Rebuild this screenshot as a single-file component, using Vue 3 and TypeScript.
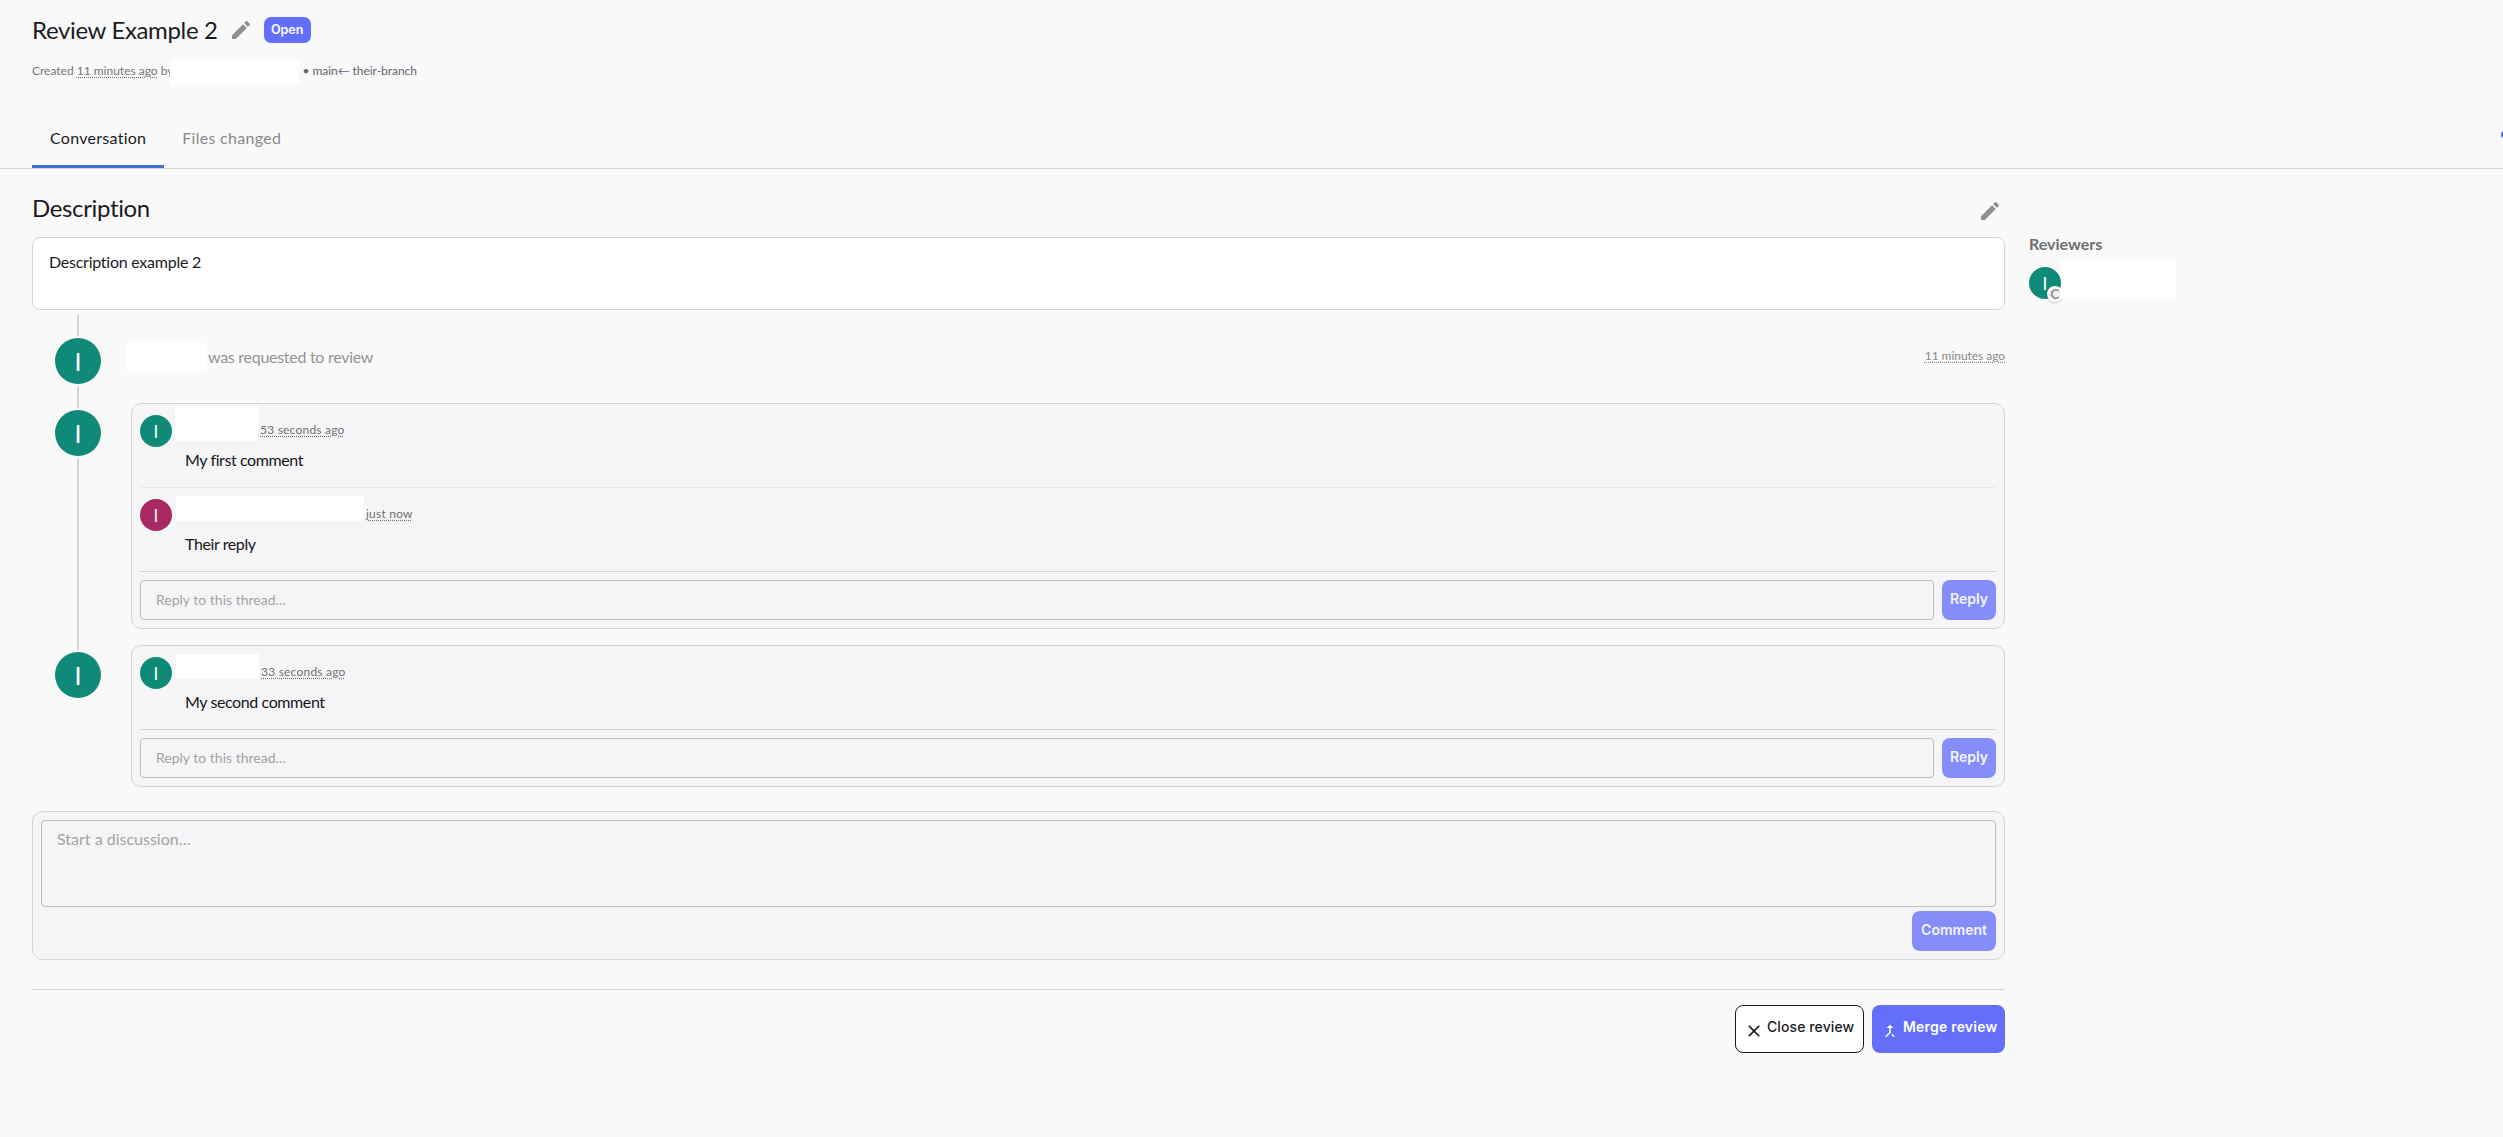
<script setup lang="ts">
interface ThreadComment {
  initialColor: string
  redactWidth: number
  tall: boolean
  time: string
  text: string
}
interface Thread {
  comments: ThreadComment[]
}

const teal = '#108a78'
const threads: Thread[] = [
  {
    comments: [
      { initialColor: teal, redactWidth: 83, tall: true, time: '53 seconds ago', text: 'My first comment' },
      { initialColor: '#a82862', redactWidth: 188, tall: false, time: 'just now', text: 'Their reply' }
    ]
  },
  {
    comments: [
      { initialColor: teal, redactWidth: 83, tall: false, time: '33 seconds ago', text: 'My second comment' }
    ]
  }
]
const pencil = 'M3 17.25V21h3.75L17.81 9.94l-3.75-3.75L3 17.25zM20.71 7.04c.39-.39.39-1.02 0-1.41l-2.34-2.34c-.39-.39-1.02-.39-1.41 0l-1.83 1.83 3.75 3.75 1.83-1.83z'
</script>

<template>
  <div class="page">
    <header class="head">
      <div class="title-row">
        <h1 class="title">Review Example 2</h1>
        <svg class="icon-edit" viewBox="0 0 24 24" width="24" height="24"><path :d="pencil" /></svg>
        <span class="badge">Open</span>
      </div>
      <div class="meta">
        <span>Created&nbsp;</span><span class="time-u">11 minutes ago</span><span>&nbsp;by</span>
        <span class="redact meta-redact"></span>
        <span class="meta-branch">• main← their-branch</span>
      </div>
    </header>

    <nav class="tabs">
      <a class="tab active">Conversation</a>
      <a class="tab">Files changed</a>
      <span class="dot"></span>
    </nav>

    <div class="columns">
      <main class="main">
        <div class="desc-head">
          <h2 class="title">Description</h2>
          <svg class="icon-edit" viewBox="0 0 24 24" width="24" height="24"><path :d="pencil" /></svg>
        </div>
        <div class="desc-box">Description example 2</div>

        <div class="timeline">
          <div class="item event">
            <div class="rail"><span class="avatar big" :style="{ background: teal }">I</span></div>
            <div class="event-body">
              <span class="redact event-redact"></span>
              <span class="event-text">was requested to review</span>
              <span class="time-u event-time">11 minutes ago</span>
            </div>
          </div>

          <div v-for="(thread, t) in threads" :key="t" class="item">
            <div class="rail"><span class="avatar big" :style="{ background: teal }">I</span></div>
            <div class="thread">
              <div v-for="(c, i) in thread.comments" :key="i" class="comment" :class="{ last: i === thread.comments.length - 1 }">
                <div class="comment-head">
                  <span class="avatar small" :style="{ background: c.initialColor }">I</span>
                  <span class="redact" :class="c.tall ? 'redact-tall' : 'redact-short'" :style="{ width: c.redactWidth + 'px' }"></span>
                  <span class="time-u comment-time">{{ c.time }}</span>
                </div>
                <p class="comment-text">{{ c.text }}</p>
              </div>
              <div class="reply-row">
                <input class="field" placeholder="Reply to this thread…" />
                <button class="btn primary-soft reply">Reply</button>
              </div>
            </div>
          </div>
        </div>

        <div class="composer">
          <textarea class="area" placeholder="Start a discussion…"></textarea>
          <div class="composer-actions">
            <button class="btn primary-soft comment-btn">Comment</button>
          </div>
        </div>

        <div class="footer">
          <button class="btn close">
            <svg viewBox="0 0 24 24" width="20" height="20"><path d="M19 6.41 17.59 5 12 10.59 6.41 5 5 6.41 10.59 12 5 17.59 6.41 19 12 13.41 17.59 19 19 17.59 13.41 12z" /></svg>
            <span>Close review</span>
          </button>
          <button class="btn merge">
            <svg viewBox="0 0 24 24" width="18" height="18"><path d="M17 20.41 18.41 19 15 15.59 13.59 17 17 20.41zM7.5 8H11v5.59L5.59 19 7 20.41l6-6V8h3.5L12 3.5 7.5 8z" /></svg>
            <span>Merge review</span>
          </button>
        </div>
      </main>

      <aside class="side">
        <h3 class="side-title">Reviewers</h3>
        <div class="reviewer">
          <span class="avatar small reviewer-avatar" :style="{ background: teal }">I<span class="mini">C</span></span>
          <span class="redact reviewer-redact"></span>
        </div>
      </aside>
    </div>
  </div>
</template>

<style scoped>
.page {
  font-family: Lato, "Liberation Sans", sans-serif;
  color: #1b1b1f;
  font-size: 16px;
}
.head {
  padding: 17px 32px 0;
  height: 108px;
  box-sizing: border-box;
}
.title-row {
  display: flex;
  align-items: center;
  height: 26px;
}
.title {
  margin: 0;
  font-size: 24px;
  font-weight: 400;
  line-height: 26px;
  letter-spacing: -0.35px;
}
.icon-edit {
  fill: #8f8f8f;
  display: block;
}
.title-row .icon-edit {
  margin-left: 11px;
}
.badge {
  margin-left: 11px;
  width: 47px;
  height: 26px;
  border-radius: 7px;
  background: #636ffb;
  color: #fff;
  font: 600 12.5px/26px Inter, sans-serif;
  text-align: center;
}
.meta {
  display: flex;
  align-items: flex-start;
  margin-top: 17px;
  font-size: 12px;
  line-height: 22px;
  color: #757575;
}
.time-u {
  text-decoration: underline dotted;
  text-underline-offset: 2px;
}
.redact {
  display: block;
  background: #fff;
  flex: none;
}
.meta-redact {
  width: 129px;
  height: 25px;
  margin-left: -3px;
}
.meta-branch {
  margin-left: 3px;
  letter-spacing: -0.05px;
  color: #5f6672;
}
.tabs {
  position: relative;
  display: flex;
  height: 60px;
  border-bottom: 1px solid #d4d4d4;
  overflow: hidden;
}
.tabs .tab:first-child {
  margin-left: 32px;
}
.tab {
  padding: 0 18px;
  height: 60px;
  box-sizing: border-box;
  line-height: 59px;
  font-size: 16px;
  letter-spacing: 0.28px;
  color: #8a8a8a;
  font-weight: 400;
}
.tab.active {
  color: #1b1b1f;
  border-bottom: 3px solid #3f6fd1;
}
.dot {
  position: absolute;
  right: -5px;
  top: 23px;
  width: 7px;
  height: 7px;
  border-radius: 50%;
  background: #3f6fd1;
}
.columns {
  display: flex;
  gap: 24px;
  padding-left: 32px;
}
.main {
  width: 1973px;
  flex: none;
  padding-top: 21px;
}
.desc-head {
  display: flex;
  align-items: center;
  justify-content: space-between;
  height: 36px;
  margin-bottom: 11px;
  padding-right: 3px;
}
.desc-head .icon-edit {
  margin-top: 5px;
}
.desc-box {
  height: 73px;
  box-sizing: border-box;
  padding: 12px 16px;
  line-height: 24px;
  letter-spacing: -0.25px;
  background: #fff;
  border: 1px solid #d4d4d4;
  border-radius: 8px;
}
.timeline {
  position: relative;
  padding-top: 21px;
  margin-bottom: 24px;
}
.timeline::before {
  content: "";
  position: absolute;
  left: 45px;
  top: 5px;
  width: 2px;
  height: 335px;
  background: #d4d4d4;
}
.item {
  position: relative;
  display: flex;
  margin-bottom: 16px;
}
.item:last-child {
  margin-bottom: 0;
}
.item.event {
  min-height: 56px;
}
.rail {
  width: 95px;
  flex: none;
  padding: 7px 0 0 23px;
  box-sizing: border-box;
}
.avatar {
  display: flex;
  align-items: center;
  justify-content: center;
  border-radius: 50%;
  color: #fff;
  flex: none;
}
.avatar.big {
  width: 46px;
  height: 46px;
  font-size: 25px;
  box-shadow: 0 0 0 2.5px #f9f9f9;
}
.avatar.small {
  width: 32px;
  height: 32px;
  font-size: 17px;
}
.event-body {
  flex: 1;
  display: flex;
  align-items: center;
  height: 29px;
  margin-top: 12px;
}
.event-redact {
  width: 80px;
  height: 29px;
}
.event-text {
  margin: -2px 0 0 1px;
  color: #939393;
  letter-spacing: -0.28px;
}
.event-time {
  margin: -4px 0 0 auto;
  font-size: 12px;
  letter-spacing: -0.05px;
  color: #8a8a8a;
}
.thread {
  flex: 1;
  margin-left: 4px;
  background: #f5f5f7;
  border: 1px solid #d4d4d4;
  border-radius: 10px;
  padding: 0 8px 8px;
}
.comment {
  padding: 2px 0 14px;
  border-bottom: 1px solid #e8e8ea;
}
.comment.last {
  border-bottom-color: #d4d4d4;
}
.comment-head {
  display: flex;
  align-items: flex-start;
}
.comment-head .avatar {
  margin-top: 9px;
}
.redact-tall {
  height: 35px;
  margin-left: 3px;
}
.redact-short {
  height: 25px;
  margin-top: 6px;
  margin-left: 4px;
}
.comment-time {
  margin: 15px 0 0 2px;
  font-size: 12px;
  letter-spacing: 0.22px;
  line-height: 18px;
  color: #707070;
}
.comment-text {
  margin: 1px 0 1px 45px;
  line-height: 24px;
  letter-spacing: -0.4px;
  color: #15151a;
}
.reply-row {
  display: flex;
  gap: 8px;
  padding-top: 8px;
}
.field,
.area {
  display: block;
  box-sizing: border-box;
  background: transparent;
  border: 1px solid #bdbdbd;
  border-radius: 4px;
  font-family: Lato, sans-serif;
  color: #1b1b1f;
  outline: none;
}
.field {
  flex: 1;
  min-width: 0;
  height: 40px;
  padding: 0 15px 2px;
  font-size: 14px;
}
.area {
  width: 100%;
  height: 87px;
  padding: 6px 15px;
  font-size: 16px;
  line-height: 24px;
  resize: none;
}
.field::placeholder,
.area::placeholder {
  color: #a3a3a3;
  opacity: 1;
}
.btn {
  border: 0;
  margin: 0;
  height: 40px;
  border-radius: 8px;
  font: 600 14px/20px Inter, sans-serif;
  padding: 0 0 2px;
  flex: none;
}
.primary-soft {
  background: #858dfb;
  color: #f4f5ff;
}
.reply {
  width: 54px;
}
.composer {
  background: #f5f5f7;
  border: 1px solid #d4d4d4;
  border-radius: 10px;
  padding: 8px;
}
.composer-actions {
  display: flex;
  justify-content: flex-end;
  margin-top: 4px;
}
.comment-btn {
  width: 84px;
}
.footer {
  display: flex;
  justify-content: flex-end;
  gap: 8px;
  margin-top: 29px;
  padding-top: 15px;
  border-top: 1px solid #d4d4d4;
}
.close,
.merge {
  display: flex;
  align-items: center;
  height: 48px;
  box-sizing: border-box;
  padding-bottom: 0;
}
.close {
  width: 129px;
  background: #fff;
  border: 1px solid #1b1b1f;
  color: #1b1b1f;
  padding-left: 8px;
  font-weight: 500;
  letter-spacing: 0.1px;
  gap: 3px;
}
.close svg {
  fill: #1b1b1f;
  margin-top: 3px;
}
.close span,
.merge span {
  margin-top: -4px;
}
.merge {
  width: 133px;
  background: #636ffb;
  color: #fff;
  padding-left: 9px;
  letter-spacing: 0.2px;
  gap: 4px;
}
.merge svg {
  fill: #fff;
  margin-top: 3px;
}
.side {
  padding-top: 64px;
}
.side-title {
  margin: 0;
  font-size: 16px;
  line-height: 22px;
  font-weight: 700;
  color: #6e6e73;
}
.reviewer {
  display: flex;
  align-items: flex-end;
  margin-top: 5px;
}
.reviewer-avatar {
  position: relative;
}
.mini {
  position: absolute;
  left: 18px;
  top: 19px;
  width: 16px;
  height: 16px;
  box-sizing: border-box;
  border: 2px solid #fff;
  border-radius: 50%;
  background: #f0f0f0;
  box-shadow: 0 1px 2px rgba(0, 0, 0, 0.2);
  color: #939393;
  font-size: 14px;
  font-weight: 700;
  line-height: 12px;
  text-align: center;
}
.reviewer-redact {
  position: relative;
  width: 115px;
  height: 39px;
}
</style>

<style>
html,
body {
  margin: 0;
  background: #f9f9f9;
}
</style>
